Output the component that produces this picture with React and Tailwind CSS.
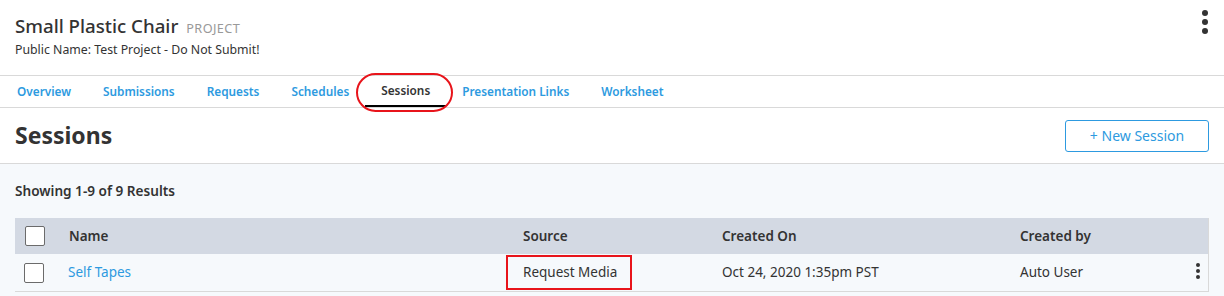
import { useState } from "react";

const tabs = ["Overview", "Submissions", "Requests", "Schedules", "Sessions", "Presentation Links", "Worksheet"];

function Kebab({ size = "lg" }) {
    const dot = size === "lg" ? "w-[6px] h-[6px]" : "w-[4px] h-[4px]";
    return (
        <div className={`flex flex-col items-center ${size === "lg" ? "gap-[3px]" : "gap-[2px]"}`}>
            <span className={`${dot} rounded-full bg-[#333]`}></span>
            <span className={`${dot} rounded-full bg-[#333]`}></span>
            <span className={`${dot} rounded-full bg-[#333]`}></span>
        </div>
    );
}

function Checkbox() {
    return <div className="w-[20px] h-[20px] bg-white border border-[#6b6b6b] rounded-[2px]"></div>;
}

export default function App() {
    const [active] = useState("Sessions");

    return (
        <div className="w-[1224px] h-[296px] overflow-hidden bg-white text-[#333]" style={{ fontFamily: '"Noto Sans", "Open Sans", sans-serif' }}>
            {/* project header */}
            <div className="h-[76px] border-b border-[#d9d9d9] flex justify-between pl-[15px] pr-[16px]">
                <div className="pt-[13px]">
                    <div className="flex items-baseline gap-[8px]">
                        <span className="text-[18.7px] leading-[26px] font-medium text-[#333]">Small Plastic Chair</span>
                        <span className="text-[12.7px] text-[#999] tracking-[0.4px]">PROJECT</span>
                    </div>
                    <p className="text-[12.3px] leading-[16px] mt-[3px] text-[#333]">Public Name: Test Project - Do Not Submit!</p>
                </div>
                <div className="pt-[10px]">
                    <Kebab />
                </div>
            </div>

            {/* tabs */}
            <div className="h-[32px] border-b border-[#d9d9d9] flex pl-[1px]">
                {tabs.map((t) => (
                    <div key={t} className={`relative px-[16px] flex items-center text-[11.8px] font-semibold ${t === active ? "text-[#333] border-b-2 border-black" : "text-[#2d9ae0]"}`}>
                        {t}
                        {t === active && (
                            <span className="absolute left-[-9px] right-[-7px] top-[-3px] bottom-[-7px] border-2 border-[#e8141b] rounded-full"></span>
                        )}
                    </div>
                ))}
            </div>

            {/* page heading */}
            <div className="h-[56px] border-b border-[#d9d9d9] flex items-center justify-between pl-[15px] pr-[15px]">
                <h1 className="text-[23px] font-bold text-[#333]">Sessions</h1>
                <button className="w-[144px] h-[32px] border border-[#2d9ae0] rounded-[3px] text-[14px] text-[#2d9ae0]">+ New Session</button>
            </div>

            {/* list */}
            <div className="bg-[#f6f9fc] px-[15px] h-[200px]">
                <p className="text-[13.6px] font-semibold pt-[17px] h-[54px] text-[#333]">Showing 1-9 of 9 Results</p>
                <div className="border-r border-[#d9d9d9]">
                    <div className="h-[36px] bg-[#d3d9e3] flex items-center text-[13.5px] font-semibold text-[#333]">
                        <div className="w-[54px] pl-[10px]"><Checkbox /></div>
                        <div className="w-[454px]">Name</div>
                        <div className="w-[199px]">Source</div>
                        <div className="w-[298px]">Created On</div>
                        <div className="flex-1">Created by</div>
                    </div>
                    <div className="h-[38px] border-b border-[#d9d9d9] flex items-center text-[13.5px] text-[#333]">
                        <div className="w-[53px] pl-[9px]"><Checkbox /></div>
                        <div className="w-[455px] text-[#2d9ae0]">Self Tapes</div>
                        <div className="w-[199px]">
                            <span className="relative">
                                Request Media
                                <span className="absolute left-[-17px] right-[-15px] top-[-8px] bottom-[-9px] border-2 border-[#e8141b]"></span>
                            </span>
                        </div>
                        <div className="w-[298px]">Oct 24, 2020 1:35pm PST</div>
                        <div className="flex-1">Auto User</div>
                        <div className="pr-[8px] pb-[4px]"><Kebab size="sm" /></div>
                    </div>
                </div>
            </div>
        </div>
    );
}
